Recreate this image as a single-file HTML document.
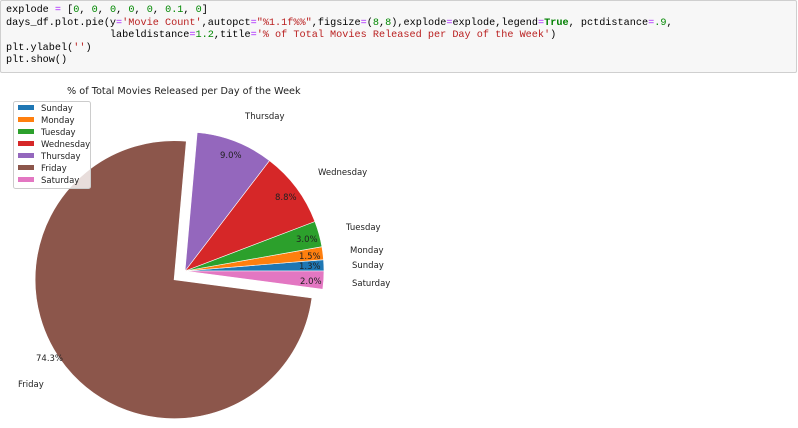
<!DOCTYPE html>
<html><head><style>
body{margin:0;width:798px;height:428px;background:#fff;overflow:hidden;position:relative}
.code{position:absolute;left:0;top:0;width:795px;height:71px;border:1px solid #cfcfcf;background:#f7f7f7;border-radius:2px}
pre{margin:0;position:absolute;left:5px;top:4px;font-family:"Liberation Mono",monospace;font-size:10.2px;line-height:12.5px;color:#000}
.o{color:#aa22ff}.n{color:#008800}.s{color:#ba2121}.k{color:#008000;font-weight:bold}
svg{position:absolute;left:0;top:0}
svg text{font-family:"DejaVu Sans","Liberation Sans",sans-serif;font-size:8.5px;fill:#222}
</style></head><body>
<div class="code"><pre>explode <span class="o">=</span> [<span class="n">0</span>, <span class="n">0</span>, <span class="n">0</span>, <span class="n">0</span>, <span class="n">0</span>, <span class="n">0.1</span>, <span class="n">0</span>]
days_df.plot.pie(y<span class="o">=</span><span class="s">'Movie Count'</span>,autopct<span class="o">=</span><span class="s">"%1.1f%%"</span>,figsize<span class="o">=</span>(<span class="n">8</span>,<span class="n">8</span>),explode<span class="o">=</span>explode,legend<span class="o">=</span><span class="k">True</span>, pctdistance<span class="o">=</span><span class="n">.9</span>,
                 labeldistance<span class="o">=</span><span class="n">1.2</span>,title<span class="o">=</span><span class="s">'% of Total Movies Released per Day of the Week'</span>)
plt.ylabel(<span class="s">''</span>)
plt.show()</pre></div>
<svg width="798" height="428">
<g stroke="#fff" stroke-width="0.6">
<path d="M185,271 L324,271 A139,139 0 0 0 323.5,259.7 Z" fill="#1f77b4"/>
<path d="M185,271 L323.5,259.7 A139,139 0 0 0 321.9,246.7 Z" fill="#ff7f0e"/>
<path d="M185,271 L321.9,246.7 A139,139 0 0 0 314.9,221.5 Z" fill="#2ca02c"/>
<path d="M185,271 L314.9,221.5 A139,139 0 0 0 269.5,160.6 Z" fill="#d62728"/>
<path d="M185,271 L269.5,160.6 A139,139 0 0 0 197.2,132.5 Z" fill="#9467bd"/>
<path d="M174.1,279.7 L186.3,141.2 A139,139 0 1 0 311.9,298 Z" fill="#8c564b"/>
<path d="M185,271 L322.8,289.3 A139,139 0 0 0 324,271 Z" fill="#e377c2"/>
</g>
<text x="67" y="94" style="font-size:9.7px">% of Total Movies Released per Day of the Week</text>
<rect x="13.5" y="101.5" width="77" height="87" rx="2" fill="#fff" fill-opacity="0.8" stroke="#ccc"/>
<rect x="18" y="105" width="16" height="5" fill="#1f77b4"/><text x="41" y="111">Sunday</text>
<rect x="18" y="117" width="16" height="5" fill="#ff7f0e"/><text x="41" y="123">Monday</text>
<rect x="18" y="129" width="16" height="5" fill="#2ca02c"/><text x="41" y="135">Tuesday</text>
<rect x="18" y="141" width="16" height="5" fill="#d62728"/><text x="41" y="147">Wednesday</text>
<rect x="18" y="153" width="16" height="5" fill="#9467bd"/><text x="41" y="159">Thursday</text>
<rect x="18" y="165" width="16" height="5" fill="#8c564b"/><text x="41" y="171">Friday</text>
<rect x="18" y="177" width="16" height="5" fill="#e377c2"/><text x="41" y="183">Saturday</text>
<text x="245" y="119">Thursday</text>
<text x="318" y="175">Wednesday</text>
<text x="346" y="230">Tuesday</text>
<text x="350" y="253">Monday</text>
<text x="352" y="268">Sunday</text>
<text x="352" y="286">Saturday</text>
<text x="18" y="387">Friday</text>
<text x="220" y="158">9.0%</text>
<text x="275" y="200">8.8%</text>
<text x="296" y="242">3.0%</text>
<text x="299" y="259">1.5%</text>
<text x="299" y="269">1.3%</text>
<text x="300" y="284">2.0%</text>
<text x="36" y="361">74.3%</text>
</svg>
</body></html>
